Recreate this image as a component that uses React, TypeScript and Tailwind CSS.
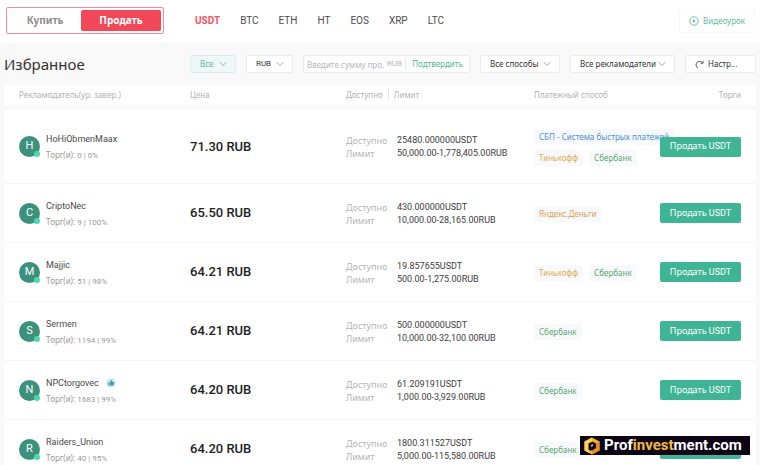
import { ChevronDown } from "lucide-react";

const coins = ["USDT", "BTC", "ETH", "HT", "EOS", "XRP", "LTC"];

const tagColors: Record<string, string> = {
  "СБП - Система быстрых платежей": "text-[#4a90d9]",
  Тинькофф: "text-[#dcae4c]",
  Сбербанк: "text-[#55a868]",
  "Яндекс.Деньги": "text-[#dba24e]",
};

const offers = [
  {
    name: "HoHiObmenMaax",
    trades: "0 | 0%",
    price: "71.30 RUB",
    available: "25480.000000USDT",
    limit: "50,000.00-1,778,405.00RUB",
    methods: ["СБП - Система быстрых платежей", "Тинькофф", "Сбербанк"],
  },
  {
    name: "CriptoNec",
    trades: "9 | 100%",
    price: "65.50 RUB",
    available: "430.000000USDT",
    limit: "10,000.00-28,165.00RUB",
    methods: ["Яндекс.Деньги"],
  },
  {
    name: "Majjic",
    trades: "51 | 98%",
    price: "64.21 RUB",
    available: "19.857655USDT",
    limit: "500.00-1,275.00RUB",
    methods: ["Тинькофф", "Сбербанк"],
  },
  {
    name: "Sermen",
    trades: "1194 | 99%",
    price: "64.21 RUB",
    available: "500.000000USDT",
    limit: "10,000.00-32,100.00RUB",
    methods: ["Сбербанк"],
  },
  {
    name: "NPCtorgovec",
    trades: "1683 | 99%",
    price: "64.20 RUB",
    available: "61.209191USDT",
    limit: "1,000.00-3,929.00RUB",
    methods: ["Сбербанк"],
    liked: true,
  },
  {
    name: "Raiders_Union",
    trades: "40 | 95%",
    price: "64.20 RUB",
    available: "1800.311527USDT",
    limit: "5,000.00-115,580.00RUB",
    methods: ["Сбербанк"],
  },
];

type Offer = (typeof offers)[number];

const FilterSelect = ({ label, value, className }: any) => (
  <div className={`relative h-[18px] rounded-xs border ${className}`}>
    <select
      aria-label={label}
      className="block h-full w-full appearance-none pr-4 pl-[9px] outline-none"
    >
      <option>{value}</option>
    </select>
    <ChevronDown
      size={12}
      strokeWidth={2}
      className="pointer-events-none absolute top-[2px] right-[6px] text-[#a5abb0]"
    />
  </div>
);

const PlayIcon = () => (
  <svg width="10" height="10" viewBox="0 0 20 20" fill="none" aria-hidden="true">
    <circle cx="10" cy="10" r="8.500" stroke="currentColor" strokeWidth="1.800" />
    <path d="M8 6.500v7l5.500-3.500z" fill="currentColor" />
  </svg>
);

const LikeBadge = () => (
  <svg width="10" height="10" viewBox="0 0 20 20" aria-hidden="true">
    <path
      d="M10 0l3 2 4 1 1 4 2 3-2 3-1 4-4 1-3 2-3-2-4-1-1-4-2-3 2-3 1-4 4-1z"
      fill="#c9e1fb"
    />
    <path
      d="M4.500 9H7v6H4.500zM8 9l2.500-5c1.500 0 2 1 1.500 4h3.500c.8 0 1 .8.800 1.500l-1.300 4.500c-.2.700-.6 1-1.300 1H8z"
      fill="#3aa58d"
    />
  </svg>
);

const OfferRow = ({ offer }: { offer: Offer }) => (
  <tr className="h-[59px] bg-white first:h-[74px] *:border-b *:border-[#f3f5f7] *:p-0">
    <td>
      <div className="flex items-center gap-[6px] pl-[15px]">
        <div className="relative flex size-[21px] shrink-0 items-center justify-center rounded-full bg-[#3c917d] text-[11px] text-white">
          {offer.name[0]}
          <span className="absolute right-0 bottom-0 size-[6px] rounded-full bg-[#4ad9ad]" />
        </div>
        <div className="pt-[2px] leading-[15px]">
          <div className="flex items-center gap-[7px] text-[9px] text-[#4a4a4a]">
            {offer.name}
            {offer.liked && <LikeBadge />}
          </div>
          <div className="text-[8px] text-[#999]">
            <span className="font-['Noto_Sans',sans-serif]">Торг(и): </span>
            {offer.trades}
          </div>
        </div>
      </div>
    </td>
    <td className="text-[13px] font-medium text-[#222]">{offer.price}</td>
    <td>
      <dl className="grid grid-cols-[51px_1fr] pt-px text-[9px] leading-[13px] text-[#3d3d3d]">
        <dt className="font-['Noto_Sans',sans-serif] text-[#b5b5b5]">Доступно</dt>
        <dd>{offer.available}</dd>
        <dt className="font-['Noto_Sans',sans-serif] text-[#b5b5b5]">Лимит</dt>
        <dd>{offer.limit}</dd>
      </dl>
    </td>
    <td>
      <ul className="flex flex-wrap gap-x-[6px] gap-y-[5px] pt-[2px] font-['Noto_Sans',sans-serif]">
        {offer.methods.map((method) => (
          <li
            key={method}
            className={`rounded-xs bg-[#f8f9fd] px-[5px] text-[8px] leading-4 whitespace-nowrap ${tagColors[method]}`}
          >
            {method}
          </li>
        ))}
      </ul>
    </td>
    <td>
      <button className="relative block h-5 w-[81px] rounded-xs bg-[#3fb596] text-[9px] whitespace-nowrap text-white">
        <span className="font-['Noto_Sans',sans-serif]">Продать</span> USDT
      </button>
    </td>
  </tr>
);

const Watermark = () => (
  <div className="absolute right-[10px] bottom-[10px] flex h-[19px] w-[170px] items-center gap-1 bg-[#0c0414] pl-1 text-[15px] font-bold text-white [font-variant-ligatures:none]">
    <svg width="16" height="18" viewBox="0 0 32 36" aria-hidden="true">
      <path d="M16 1L31 9v18l-15 8L1 27V9z" fill="#f5b52e" />
      <path d="M16 1L1 9v18l9 5V13l6-4z" fill="#ffd05a" />
      <path d="M31 9v18l-15 8v-8l7-4V13z" fill="#e58c28" />
      <path d="M17 9l7 4v9l-8 5-2-1v-6l4-2v-4l-4 2v12l-5-3V13z" fill="#0c0414" />
    </svg>
    <span>
      Prof<span className="text-[#f0b941]">invest</span>ment.com
    </span>
  </div>
);

export default function App() {
  return (
    <div className="relative h-screen overflow-hidden bg-[#f9f9f9] font-[Roboto,'Noto_Sans',sans-serif]">
      <header className="flex h-[43px] items-center bg-white pr-[5px] pb-[2px] pl-[6px]">
        <div className="flex h-[27px] w-[158px] rounded-xs border border-[#f58a94] p-[2px] font-['Noto_Sans',sans-serif] text-[10px] font-bold">
          <button className="flex-1 text-[#8e8e8e]">Купить</button>
          <button className="w-20 rounded-xs bg-[#f04858] text-white">Продать</button>
        </div>
        <nav className="ml-[31px] flex gap-5 text-[10px] text-[#4d4d4d]">
          {coins.map((coin) => (
            <a
              key={coin}
              href={`#${coin}`}
              className="first:font-bold first:text-[#f25565]"
            >
              {coin}
            </a>
          ))}
        </nav>
        <a
          href="#video"
          className="ml-auto flex h-6 items-center gap-1 rounded-xs border border-[#f1faf7] px-[9px] font-['Noto_Sans',sans-serif] text-[8px] text-[#5dbb9d]"
        >
          <PlayIcon />
          Видеоурок
        </a>
      </header>

      <main className="px-1">
        <div className="flex h-[42px] items-center font-['Noto_Sans',sans-serif]">
          <h1 className="flex-1 text-[15px] text-[#333]">Избранное</h1>
          <div className="flex items-center gap-[10px] text-[8px] text-[#333]">
            <FilterSelect
              label="Тип"
              value="Все"
              className="w-[46px] border-[#dcefeb] bg-[#eef8f6] text-[#5dbb9d]"
            />
            <FilterSelect
              label="Валюта"
              value="RUB"
              className="w-[47px] border-[#e9ebed] bg-white font-[Roboto,sans-serif]"
            />
            <div className="flex h-[18px] w-[167px] items-center rounded-xs border border-[#e9ebed] bg-white">
              <input
                aria-label="Сумма"
                placeholder="Введите сумму про,"
                className="h-full w-0 flex-1 pl-[3px] outline-none placeholder:text-[#b5b8bb]"
              />
              <span className="px-[3px] font-[Roboto,sans-serif] text-[#b5b8bb]">RUB</span>
              <button className="h-full w-[64px] border-l border-[#e9ebed] text-[#4fb596]">
                Подтвердить
              </button>
            </div>
            <FilterSelect
              label="Способ оплаты"
              value="Все способы"
              className="w-20 border-[#e9ebed] bg-white"
            />
            <FilterSelect
              label="Рекламодатели"
              value="Все рекламодатели"
              className="w-[105px] border-[#e9ebed] bg-white"
            />
            <button className="flex h-[18px] w-[71px] items-center gap-1 rounded-xs border border-[#e9ebed] bg-white pl-[9px]">
              <svg width="9" height="9" viewBox="0 0 18 18" fill="none" aria-hidden="true">
                <path d="M6 16A7 7 0 1 1 15 6" stroke="#555" strokeWidth="2" />
                <path d="M11.500 6.500H16V2" stroke="#555" strokeWidth="2" />
              </svg>
              Настр...
            </button>
          </div>
        </div>

        <table className="w-full table-fixed border-separate border-spacing-0 text-left">
          <thead className="font-['Noto_Sans',sans-serif] text-[8px] text-[#b0b3b6]">
            <tr className="h-[25px] bg-white *:border-b-[5px] *:border-[#f9f9f9] *:p-0 *:font-normal">
              <th>
                <span className="pl-[15px]">Рекламодатель(ур. завер.)</span>
              </th>
              <th className="w-[156px]">Цена</th>
              <th className="w-[188px]">
                <span className="mr-[5px] border-r border-[#e5e5e5] pr-[5px]">Доступно</span>
                Лимит
              </th>
              <th className="w-[126px]">Платежный способ</th>
              <th className="w-[96px] text-right">
                <span className="pr-[15px]">Торги</span>
              </th>
            </tr>
          </thead>
          <tbody>
            {offers.map((offer) => (
              <OfferRow key={offer.name} offer={offer} />
            ))}
          </tbody>
        </table>
      </main>

      <Watermark />
    </div>
  );
}
